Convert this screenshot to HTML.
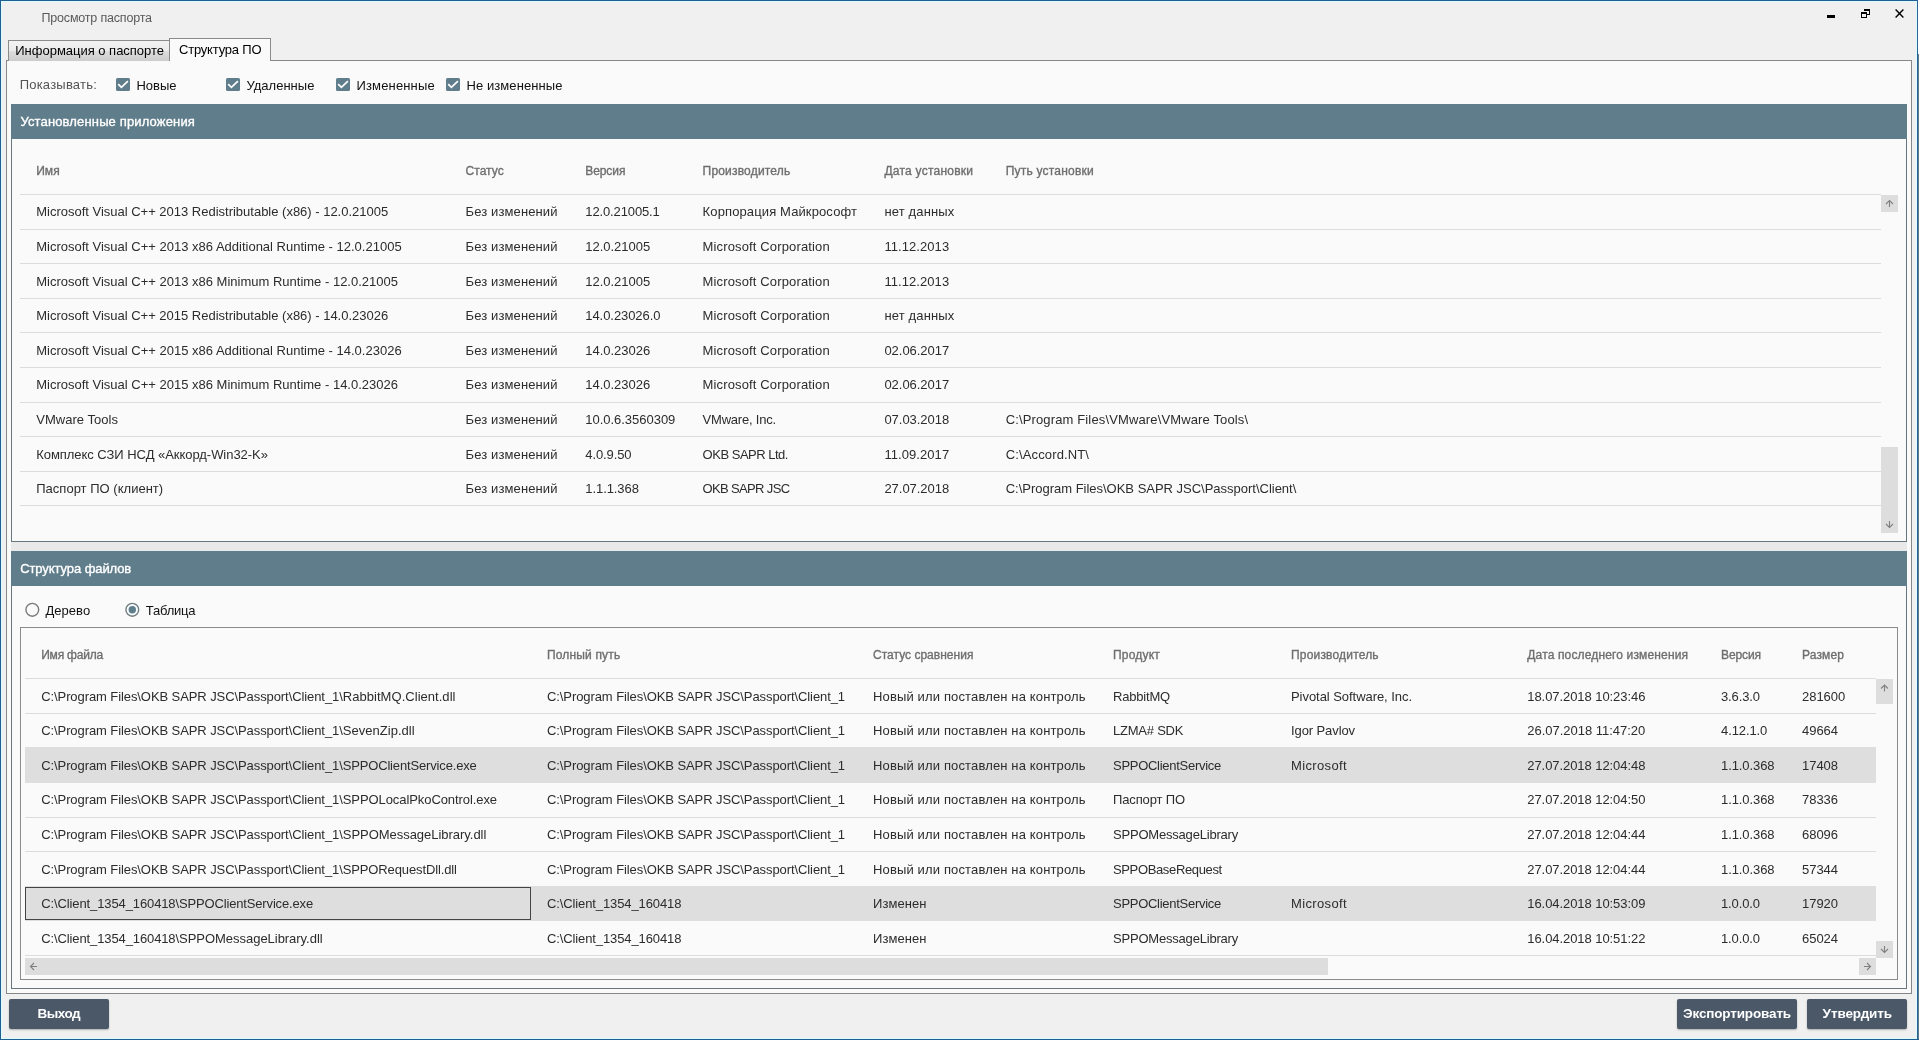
<!DOCTYPE html><html lang="ru"><head><meta charset="utf-8"><title>Просмотр паспорта</title><style>
html,body{margin:0;padding:0}
body{width:1919px;height:1040px;position:relative;overflow:hidden;background:#f0f0f0;font-family:"Liberation Sans",sans-serif;font-size:13px;color:#2c2c2c}
.a{position:absolute}
.t{position:absolute;white-space:nowrap;line-height:16px;height:16px}
.h{position:absolute;white-space:nowrap;line-height:14px;height:14px;font-size:12px;color:#6e6e6e;-webkit-text-stroke:0.35px #6e6e6e}
.w{position:absolute;white-space:nowrap;line-height:16px;height:16px;color:#fff;-webkit-text-stroke:0.35px #fff}
.ln{position:absolute;height:1px;background:#dcdcdc}
.bar{position:absolute;background:#607d8b}
.btn{position:absolute;background:#4a5868;border-radius:2px;height:30px;top:999px;box-shadow:0 1px 2px rgba(0,0,0,.28)}
.bt{position:absolute;white-space:nowrap;color:#fff;font-weight:bold;font-size:13.5px;line-height:16px;height:16px}
.sb{position:absolute;background:#dddddd}
.cb{position:absolute;width:14px;height:13px;top:78px;background:#607d8b;border-radius:1.5px}
</style></head><body><div class="a" style="left:0;top:0;width:1919px;height:1040px;will-change:transform">
<div class="a" style="left:0;top:0;width:1919px;height:1px;background:#1f5f92"></div>
<div class="a" style="left:1px;top:1px;width:1916px;height:1px;background:#dcfdff"></div>
<div class="a" style="left:0;top:0;width:1px;height:1040px;background:#1f5f92"></div>
<div class="a" style="left:1px;top:1px;width:1px;height:1038px;background:#dcfdff"></div>
<div class="a" style="left:1916px;top:1px;width:1px;height:1038px;background:#dcfdff"></div>
<div class="a" style="left:1917px;top:0;width:1px;height:1040px;background:#2a6496"></div>
<div class="a" style="left:1918px;top:0;width:1px;height:54px;background:#ffffff"></div>
<div class="a" style="left:1918px;top:54px;width:1px;height:986px;background:#62788f"></div>
<div class="a" style="left:1px;top:1038px;width:1916px;height:1px;background:#dcfdff"></div>
<div class="a" style="left:0;top:1039px;width:1919px;height:1px;background:#1f5f92"></div>
<div class="t" style="left:41.5px;top:10px;color:#5a5a5a;font-size:12.5px;letter-spacing:-0.186px">Просмотр паспорта</div>
<svg class="a" style="left:1820px;top:4px" width="96" height="20" viewBox="1820 4 96 20" shape-rendering="crispEdges"><rect x="1827" y="15" width="8" height="3" fill="#000"/><rect x="1861" y="12" width="6" height="2" fill="#000"/><rect x="1861" y="14" width="1" height="4" fill="#000"/><rect x="1866" y="14" width="1" height="4" fill="#000"/><rect x="1861" y="17" width="6" height="1" fill="#000"/><rect x="1864" y="9" width="6" height="2" fill="#000"/><rect x="1869" y="11" width="1" height="4" fill="#000"/><rect x="1867" y="14" width="3" height="1" fill="#000"/><path d="M1895.6 9.6L1903.4 17.4M1903.4 9.6L1895.6 17.4" stroke="#000" stroke-width="1.4" fill="none" shape-rendering="auto"/></svg>
<div class="a" style="left:6px;top:60px;width:1904px;height:932px;border:1px solid #868789;background:#fafafa"></div>
<div class="a" style="left:8px;top:40px;width:160px;height:20px;border:1px solid #8a8b8d;border-bottom:none;background:linear-gradient(#f3f3f3 0%,#ebebeb 50%,#dddddd 50%,#cdcdcd 100%)"></div>
<div class="t" style="left:15.3px;top:43px;color:#000;letter-spacing:-0.018px">Информация о паспорте</div>
<div class="a" style="left:169px;top:38px;width:100px;height:22px;border:1px solid #8a8b8d;border-bottom:none;background:#fafafa"></div>
<div class="t" style="left:179px;top:42px;color:#000;letter-spacing:-0.204px">Структура ПО</div>
<div class="t" style="left:19.7px;top:77px;color:#555;letter-spacing:0.211px">Показывать:</div>
<div class="cb" style="left:116px"><svg width="14" height="13" viewBox="0 0 14 13"><path d="M2.2 6.1L5.4 9.3L11.9 3.1" fill="none" stroke="#fff" stroke-width="1.7"/></svg></div>
<div class="t" style="left:136.5px;top:78px;color:#111;letter-spacing:-0.022px">Новые</div>
<div class="cb" style="left:226px"><svg width="14" height="13" viewBox="0 0 14 13"><path d="M2.2 6.1L5.4 9.3L11.9 3.1" fill="none" stroke="#fff" stroke-width="1.7"/></svg></div>
<div class="t" style="left:246.5px;top:78px;color:#111;letter-spacing:0.010px">Удаленные</div>
<div class="cb" style="left:336px"><svg width="14" height="13" viewBox="0 0 14 13"><path d="M2.2 6.1L5.4 9.3L11.9 3.1" fill="none" stroke="#fff" stroke-width="1.7"/></svg></div>
<div class="t" style="left:356.5px;top:78px;color:#111;letter-spacing:0.147px">Измененные</div>
<div class="cb" style="left:446px"><svg width="14" height="13" viewBox="0 0 14 13"><path d="M2.2 6.1L5.4 9.3L11.9 3.1" fill="none" stroke="#fff" stroke-width="1.7"/></svg></div>
<div class="t" style="left:466.5px;top:78px;color:#111;letter-spacing:0.079px">Не измененные</div>
<div class="a" style="left:11px;top:104px;width:1896px;height:438px;border:1px solid #68777f;box-sizing:border-box"></div>
<div class="bar" style="left:11px;top:104px;width:1896px;height:35px"></div>
<div class="w" style="left:20.4px;top:114px;;letter-spacing:0.147px">Установленные приложения</div>
<div class="h" style="left:36.2px;top:164px;;letter-spacing:0.042px">Имя</div>
<div class="h" style="left:465.5px;top:164px;;letter-spacing:0.060px">Статус</div>
<div class="h" style="left:585.3px;top:164px;;letter-spacing:-0.094px">Версия</div>
<div class="h" style="left:702.6px;top:164px;;letter-spacing:0.182px">Производитель</div>
<div class="h" style="left:884.4px;top:164px;;letter-spacing:0.247px">Дата установки</div>
<div class="h" style="left:1005.7px;top:164px;;letter-spacing:0.211px">Путь установки</div>
<div class="ln" style="left:20px;top:194px;width:1861px"></div>
<div class="ln" style="left:20px;top:229px;width:1861px"></div>
<div class="ln" style="left:20px;top:263px;width:1861px"></div>
<div class="ln" style="left:20px;top:298px;width:1861px"></div>
<div class="ln" style="left:20px;top:332px;width:1861px"></div>
<div class="ln" style="left:20px;top:367px;width:1861px"></div>
<div class="ln" style="left:20px;top:402px;width:1861px"></div>
<div class="ln" style="left:20px;top:436px;width:1861px"></div>
<div class="ln" style="left:20px;top:471px;width:1861px"></div>
<div class="ln" style="left:20px;top:505px;width:1861px"></div>
<div class="t" style="left:36.2px;top:204px;;letter-spacing:-0.007px">Microsoft Visual C++ 2013 Redistributable (x86) - 12.0.21005</div>
<div class="t" style="left:465.5px;top:204px;;letter-spacing:0.118px">Без изменений</div>
<div class="t" style="left:585.3px;top:204px;;letter-spacing:-0.126px">12.0.21005.1</div>
<div class="t" style="left:702.6px;top:204px;;letter-spacing:0.120px">Корпорация Майкрософт</div>
<div class="t" style="left:884.4px;top:204px;;letter-spacing:0.154px">нет данных</div>
<div class="t" style="left:36.2px;top:239px;">Microsoft Visual C++ 2013 x86 Additional Runtime - 12.0.21005</div>
<div class="t" style="left:465.5px;top:239px;;letter-spacing:0.118px">Без изменений</div>
<div class="t" style="left:585.3px;top:239px;;letter-spacing:-0.028px">12.0.21005</div>
<div class="t" style="left:702.6px;top:239px;;letter-spacing:0.139px">Microsoft Corporation</div>
<div class="t" style="left:884.4px;top:239px;;letter-spacing:0.069px">11.12.2013</div>
<div class="t" style="left:36.2px;top:274px;">Microsoft Visual C++ 2013 x86 Minimum Runtime - 12.0.21005</div>
<div class="t" style="left:465.5px;top:274px;;letter-spacing:0.118px">Без изменений</div>
<div class="t" style="left:585.3px;top:274px;;letter-spacing:-0.028px">12.0.21005</div>
<div class="t" style="left:702.6px;top:274px;;letter-spacing:0.139px">Microsoft Corporation</div>
<div class="t" style="left:884.4px;top:274px;;letter-spacing:0.069px">11.12.2013</div>
<div class="t" style="left:36.2px;top:308px;;letter-spacing:-0.007px">Microsoft Visual C++ 2015 Redistributable (x86) - 14.0.23026</div>
<div class="t" style="left:465.5px;top:308px;;letter-spacing:0.118px">Без изменений</div>
<div class="t" style="left:585.3px;top:308px;;letter-spacing:-0.067px">14.0.23026.0</div>
<div class="t" style="left:702.6px;top:308px;;letter-spacing:0.139px">Microsoft Corporation</div>
<div class="t" style="left:884.4px;top:308px;;letter-spacing:0.154px">нет данных</div>
<div class="t" style="left:36.2px;top:343px;">Microsoft Visual C++ 2015 x86 Additional Runtime - 14.0.23026</div>
<div class="t" style="left:465.5px;top:343px;;letter-spacing:0.118px">Без изменений</div>
<div class="t" style="left:585.3px;top:343px;;letter-spacing:-0.028px">14.0.23026</div>
<div class="t" style="left:702.6px;top:343px;;letter-spacing:0.139px">Microsoft Corporation</div>
<div class="t" style="left:884.4px;top:343px;;letter-spacing:-0.028px">02.06.2017</div>
<div class="t" style="left:36.2px;top:377px;">Microsoft Visual C++ 2015 x86 Minimum Runtime - 14.0.23026</div>
<div class="t" style="left:465.5px;top:377px;;letter-spacing:0.118px">Без изменений</div>
<div class="t" style="left:585.3px;top:377px;;letter-spacing:-0.028px">14.0.23026</div>
<div class="t" style="left:702.6px;top:377px;;letter-spacing:0.139px">Microsoft Corporation</div>
<div class="t" style="left:884.4px;top:377px;;letter-spacing:-0.028px">02.06.2017</div>
<div class="t" style="left:36.2px;top:412px;;letter-spacing:0.033px">VMware Tools</div>
<div class="t" style="left:465.5px;top:412px;;letter-spacing:0.118px">Без изменений</div>
<div class="t" style="left:585.3px;top:412px;;letter-spacing:-0.027px">10.0.6.3560309</div>
<div class="t" style="left:702.6px;top:412px;;letter-spacing:-0.213px">VMware, Inc.</div>
<div class="t" style="left:884.4px;top:412px;;letter-spacing:-0.028px">07.03.2018</div>
<div class="t" style="left:1005.7px;top:412px;;letter-spacing:0.137px">C:\Program Files\VMware\VMware Tools\</div>
<div class="t" style="left:36.2px;top:447px;;letter-spacing:-0.042px">Комплекс СЗИ НСД «Аккорд-Win32-K»</div>
<div class="t" style="left:465.5px;top:447px;;letter-spacing:0.118px">Без изменений</div>
<div class="t" style="left:585.3px;top:447px;;letter-spacing:-0.112px">4.0.9.50</div>
<div class="t" style="left:702.6px;top:447px;;letter-spacing:-0.490px">OKB SAPR Ltd.</div>
<div class="t" style="left:884.4px;top:447px;;letter-spacing:0.069px">11.09.2017</div>
<div class="t" style="left:1005.7px;top:447px;;letter-spacing:0.137px">C:\Accord.NT\</div>
<div class="t" style="left:36.2px;top:481px;;letter-spacing:0.020px">Паспорт ПО (клиент)</div>
<div class="t" style="left:465.5px;top:481px;;letter-spacing:0.118px">Без изменений</div>
<div class="t" style="left:585.3px;top:481px;;letter-spacing:-0.080px">1.1.1.368</div>
<div class="t" style="left:702.6px;top:481px;;letter-spacing:-0.653px">OKB SAPR JSC</div>
<div class="t" style="left:884.4px;top:481px;;letter-spacing:-0.028px">27.07.2018</div>
<div class="t" style="left:1005.7px;top:481px;;letter-spacing:-0.012px">C:\Program Files\OKB SAPR JSC\Passport\Client\</div>
<div class="sb" style="left:1881px;top:195px;width:17px;height:17px"></div>
<div class="sb" style="left:1881px;top:447px;width:17px;height:86px"></div>
<div class="a" style="left:11px;top:542px;width:1896px;height:9px;background:#e9e9e9"></div>
<div class="a" style="left:11px;top:551px;width:1896px;height:438px;border:1px solid #68777f;box-sizing:border-box"></div>
<div class="bar" style="left:11px;top:551px;width:1896px;height:35px"></div>
<div class="w" style="left:20.2px;top:561px;;letter-spacing:-0.084px">Структура файлов</div>
<svg class="a" style="left:20px;top:598px" width="130" height="24" viewBox="20 598 130 24"><circle cx="32.3" cy="609.8" r="6.4" fill="#fafafa" stroke="#7a7a7a" stroke-width="1.4"/><circle cx="132.3" cy="609.8" r="6.4" fill="#f8feff" stroke="#737b7f" stroke-width="1.4"/><circle cx="132.3" cy="609.7" r="3.7" fill="#607d8b"/></svg>
<div class="t" style="left:45.4px;top:603px;color:#111;letter-spacing:0.053px">Дерево</div>
<div class="t" style="left:145.8px;top:603px;color:#111;letter-spacing:-0.198px">Таблица</div>
<div class="a" style="left:20px;top:627px;width:1876px;height:351px;border:1px solid #8a8b8d"></div>
<div class="h" style="left:41.2px;top:648px;;letter-spacing:-0.193px">Имя файла</div>
<div class="h" style="left:547px;top:648px;;letter-spacing:0.157px">Полный путь</div>
<div class="h" style="left:873px;top:648px;;letter-spacing:0.017px">Статус сравнения</div>
<div class="h" style="left:1113px;top:648px;;letter-spacing:0.201px">Продукт</div>
<div class="h" style="left:1291px;top:648px;;letter-spacing:0.182px">Производитель</div>
<div class="h" style="left:1527.3px;top:648px;;letter-spacing:0.149px">Дата последнего изменения</div>
<div class="h" style="left:1721px;top:648px;;letter-spacing:-0.094px">Версия</div>
<div class="h" style="left:1802px;top:648px;;letter-spacing:0.125px">Размер</div>
<div class="a" style="left:25px;top:747px;width:1851px;height:36px;background:#dedede"></div>
<div class="a" style="left:25px;top:886px;width:1851px;height:35px;background:#dedede"></div>
<div class="ln" style="left:25px;top:678px;width:1851px"></div>
<div class="ln" style="left:25px;top:713px;width:1851px"></div>
<div class="ln" style="left:25px;top:817px;width:1851px"></div>
<div class="ln" style="left:25px;top:851px;width:1851px"></div>
<div class="ln" style="left:25px;top:955px;width:1851px"></div>
<div class="a" style="left:25px;top:887px;width:504px;height:31px;border:1px solid #444"></div>
<div class="t" style="left:41.2px;top:689px;"><span style="letter-spacing:-0.085px">C:\Program Files\OKB SAPR JSC\Passport\Client_1</span><span style="letter-spacing:0.035px">\RabbitMQ.Client.dll</span></div>
<div class="t" style="left:547px;top:689px;;letter-spacing:-0.085px">C:\Program Files\OKB SAPR JSC\Passport\Client_1</div>
<div class="t" style="left:873px;top:689px;;letter-spacing:0.144px">Новый или поставлен на контроль</div>
<div class="t" style="left:1113px;top:689px;;letter-spacing:-0.191px">RabbitMQ</div>
<div class="t" style="left:1291px;top:689px;;letter-spacing:-0.051px">Pivotal Software, Inc.</div>
<div class="t" style="left:1527.3px;top:689px;;letter-spacing:-0.067px">18.07.2018 10:23:46</div>
<div class="t" style="left:1721px;top:689px;;letter-spacing:-0.138px">3.6.3.0</div>
<div class="t" style="left:1802px;top:689px;;letter-spacing:-0.032px">281600</div>
<div class="t" style="left:41.2px;top:723px;"><span style="letter-spacing:-0.085px">C:\Program Files\OKB SAPR JSC\Passport\Client_1</span><span style="letter-spacing:0.019px">\SevenZip.dll</span></div>
<div class="t" style="left:547px;top:723px;;letter-spacing:-0.085px">C:\Program Files\OKB SAPR JSC\Passport\Client_1</div>
<div class="t" style="left:873px;top:723px;;letter-spacing:0.144px">Новый или поставлен на контроль</div>
<div class="t" style="left:1113px;top:723px;;letter-spacing:-0.228px">LZMA# SDK</div>
<div class="t" style="left:1291px;top:723px;;letter-spacing:-0.095px">Igor Pavlov</div>
<div class="t" style="left:1527.3px;top:723px;;letter-spacing:-0.017px">26.07.2018 11:47:20</div>
<div class="t" style="left:1721px;top:723px;;letter-spacing:-0.100px">4.12.1.0</div>
<div class="t" style="left:1802px;top:723px;;letter-spacing:-0.031px">49664</div>
<div class="t" style="left:41.2px;top:758px;"><span style="letter-spacing:-0.085px">C:\Program Files\OKB SAPR JSC\Passport\Client_1</span><span style="letter-spacing:-0.155px">\SPPOClientService.exe</span></div>
<div class="t" style="left:547px;top:758px;;letter-spacing:-0.085px">C:\Program Files\OKB SAPR JSC\Passport\Client_1</div>
<div class="t" style="left:873px;top:758px;;letter-spacing:0.144px">Новый или поставлен на контроль</div>
<div class="t" style="left:1113px;top:758px;;letter-spacing:-0.278px">SPPOClientService</div>
<div class="t" style="left:1291px;top:758px;;letter-spacing:0.352px">Microsoft</div>
<div class="t" style="left:1527.3px;top:758px;;letter-spacing:-0.067px">27.07.2018 12:04:48</div>
<div class="t" style="left:1721px;top:758px;;letter-spacing:-0.080px">1.1.0.368</div>
<div class="t" style="left:1802px;top:758px;;letter-spacing:-0.031px">17408</div>
<div class="t" style="left:41.2px;top:792px;"><span style="letter-spacing:-0.085px">C:\Program Files\OKB SAPR JSC\Passport\Client_1</span><span style="letter-spacing:-0.079px">\SPPOLocalPkoControl.exe</span></div>
<div class="t" style="left:547px;top:792px;;letter-spacing:-0.085px">C:\Program Files\OKB SAPR JSC\Passport\Client_1</div>
<div class="t" style="left:873px;top:792px;;letter-spacing:0.144px">Новый или поставлен на контроль</div>
<div class="t" style="left:1113px;top:792px;;letter-spacing:-0.131px">Паспорт ПО</div>
<div class="t" style="left:1527.3px;top:792px;;letter-spacing:-0.067px">27.07.2018 12:04:50</div>
<div class="t" style="left:1721px;top:792px;;letter-spacing:-0.080px">1.1.0.368</div>
<div class="t" style="left:1802px;top:792px;;letter-spacing:-0.031px">78336</div>
<div class="t" style="left:41.2px;top:827px;"><span style="letter-spacing:-0.085px">C:\Program Files\OKB SAPR JSC\Passport\Client_1</span><span style="letter-spacing:-0.034px">\SPPOMessageLibrary.dll</span></div>
<div class="t" style="left:547px;top:827px;;letter-spacing:-0.085px">C:\Program Files\OKB SAPR JSC\Passport\Client_1</div>
<div class="t" style="left:873px;top:827px;;letter-spacing:0.144px">Новый или поставлен на контроль</div>
<div class="t" style="left:1113px;top:827px;;letter-spacing:-0.201px">SPPOMessageLibrary</div>
<div class="t" style="left:1527.3px;top:827px;;letter-spacing:-0.067px">27.07.2018 12:04:44</div>
<div class="t" style="left:1721px;top:827px;;letter-spacing:-0.080px">1.1.0.368</div>
<div class="t" style="left:1802px;top:827px;;letter-spacing:-0.031px">68096</div>
<div class="t" style="left:41.2px;top:862px;"><span style="letter-spacing:-0.085px">C:\Program Files\OKB SAPR JSC\Passport\Client_1</span><span style="letter-spacing:-0.119px">\SPPORequestDll.dll</span></div>
<div class="t" style="left:547px;top:862px;;letter-spacing:-0.085px">C:\Program Files\OKB SAPR JSC\Passport\Client_1</div>
<div class="t" style="left:873px;top:862px;;letter-spacing:0.144px">Новый или поставлен на контроль</div>
<div class="t" style="left:1113px;top:862px;;letter-spacing:-0.359px">SPPOBaseRequest</div>
<div class="t" style="left:1527.3px;top:862px;;letter-spacing:-0.067px">27.07.2018 12:04:44</div>
<div class="t" style="left:1721px;top:862px;;letter-spacing:-0.080px">1.1.0.368</div>
<div class="t" style="left:1802px;top:862px;;letter-spacing:-0.031px">57344</div>
<div class="t" style="left:41.2px;top:896px;"><span style="letter-spacing:-0.110px">C:\Client_1354_160418</span><span style="letter-spacing:-0.155px">\SPPOClientService.exe</span></div>
<div class="t" style="left:547px;top:896px;;letter-spacing:-0.110px">C:\Client_1354_160418</div>
<div class="t" style="left:873px;top:896px;;letter-spacing:0.077px">Изменен</div>
<div class="t" style="left:1113px;top:896px;;letter-spacing:-0.278px">SPPOClientService</div>
<div class="t" style="left:1291px;top:896px;;letter-spacing:0.352px">Microsoft</div>
<div class="t" style="left:1527.3px;top:896px;;letter-spacing:-0.067px">16.04.2018 10:53:09</div>
<div class="t" style="left:1721px;top:896px;;letter-spacing:-0.138px">1.0.0.0</div>
<div class="t" style="left:1802px;top:896px;;letter-spacing:-0.031px">17920</div>
<div class="t" style="left:41.2px;top:931px;"><span style="letter-spacing:-0.110px">C:\Client_1354_160418</span><span style="letter-spacing:-0.034px">\SPPOMessageLibrary.dll</span></div>
<div class="t" style="left:547px;top:931px;;letter-spacing:-0.110px">C:\Client_1354_160418</div>
<div class="t" style="left:873px;top:931px;;letter-spacing:0.077px">Изменен</div>
<div class="t" style="left:1113px;top:931px;;letter-spacing:-0.201px">SPPOMessageLibrary</div>
<div class="t" style="left:1527.3px;top:931px;;letter-spacing:-0.067px">16.04.2018 10:51:22</div>
<div class="t" style="left:1721px;top:931px;;letter-spacing:-0.138px">1.0.0.0</div>
<div class="t" style="left:1802px;top:931px;;letter-spacing:-0.031px">65024</div>
<div class="sb" style="left:1876px;top:679px;width:17px;height:25px"></div>
<div class="sb" style="left:1876px;top:941px;width:17px;height:17px"></div>
<div class="sb" style="left:25px;top:958px;width:1303px;height:17px"></div>
<div class="sb" style="left:1859px;top:958px;width:17px;height:17px"></div>
<svg class="a" style="left:0;top:0" width="1919" height="1040"><path d="M1889.5 207.0V200.5M1886.0 204.0L1889.5 200.5L1893.0 204.0M1889.5 521.0V527.5M1886.0 524.0L1889.5 527.5L1893.0 524.0M1884.5 691.5V685M1881.0 688.5L1884.5 685L1888.0 688.5M1884.5 946.0V952.5M1881.0 949.0L1884.5 952.5L1888.0 949.0M37.0 966.5H30.5M34.0 963.0L30.5 966.5L34.0 970.0M1864.0 966.5H1870.5M1867.0 963.0L1870.5 966.5L1867.0 970.0" fill="none" stroke="#808080" stroke-width="1.1"/></svg>
<div class="btn" style="left:9px;width:100px"></div>
<div class="btn" style="left:1677px;width:120px"></div>
<div class="btn" style="left:1807px;width:100px"></div>
<div class="bt" style="left:37.5px;top:1006px;;letter-spacing:-0.519px">Выход</div>
<div class="bt" style="left:1683px;top:1006px;;letter-spacing:-0.151px">Экспортировать</div>
<div class="bt" style="left:1822.6px;top:1006px;;letter-spacing:-0.103px">Утвердить</div>
</div></body></html>
